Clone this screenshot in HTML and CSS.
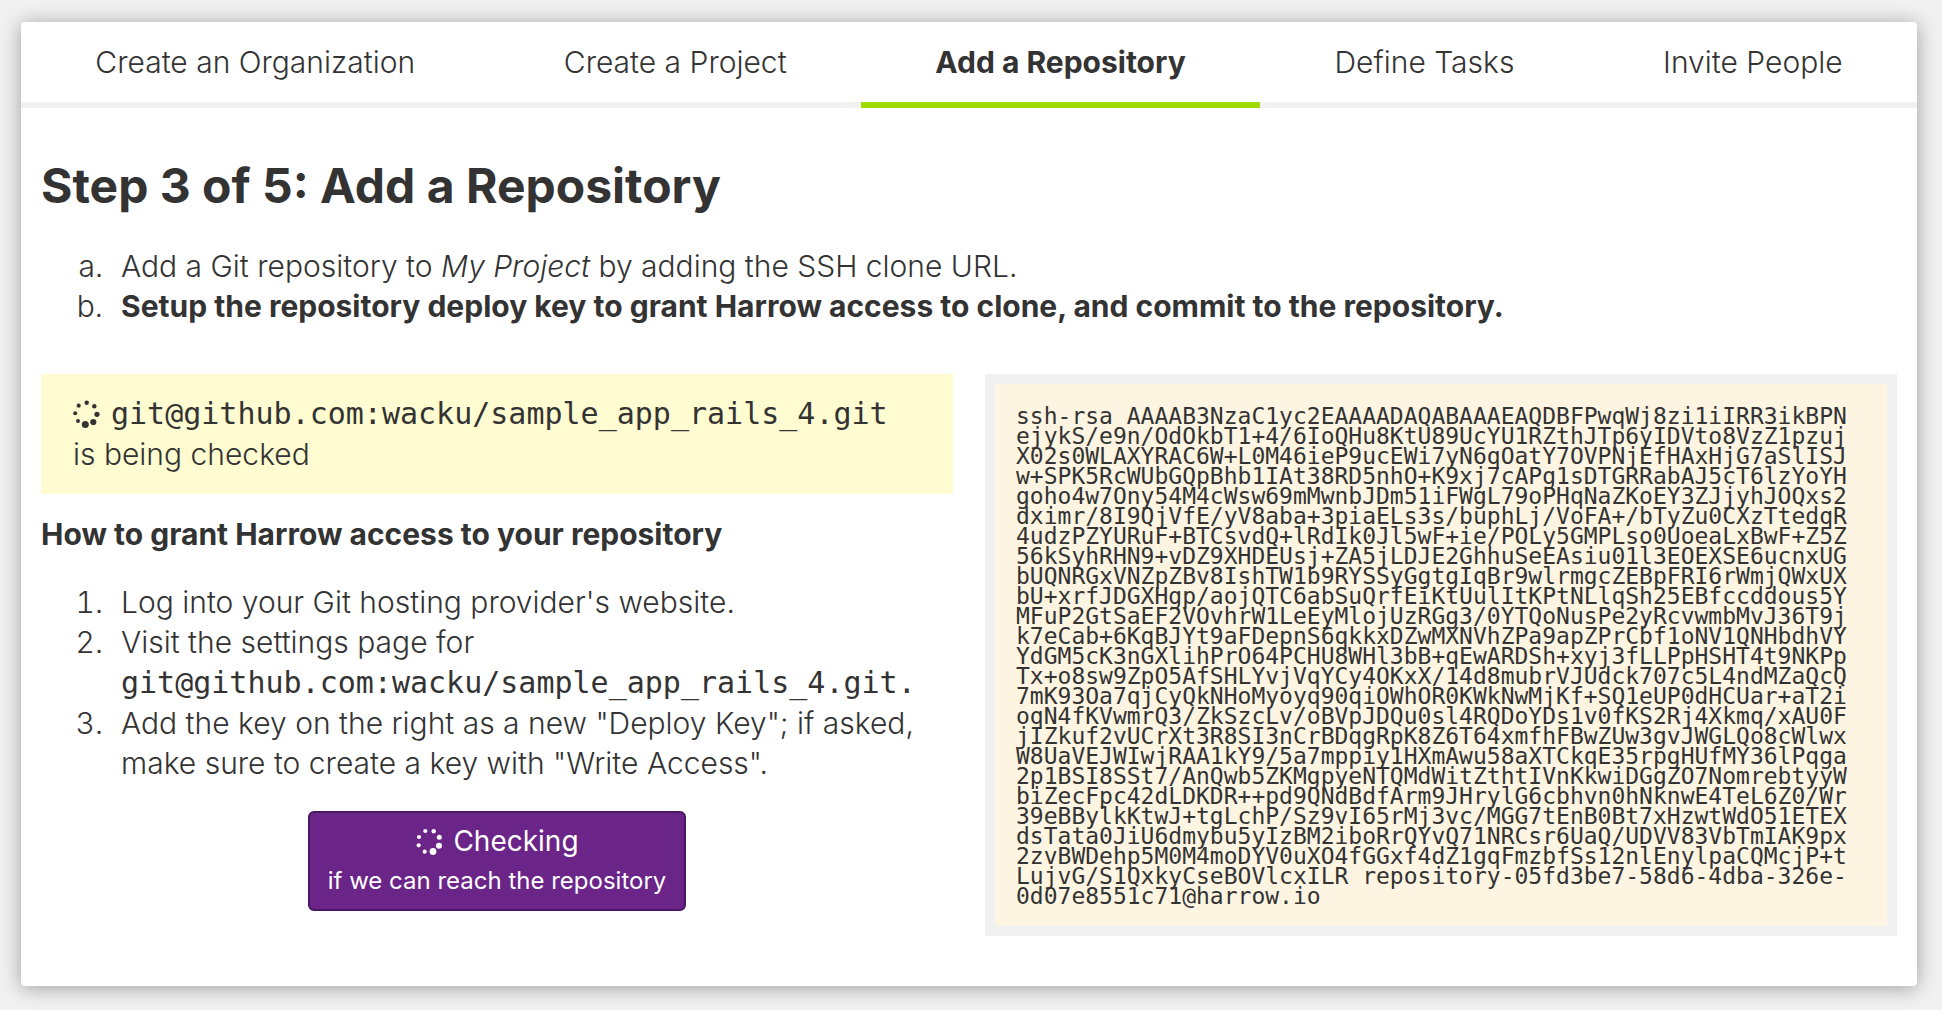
FILE: index.html
```html
<!DOCTYPE html>
<html lang="en">
<head>
<meta charset="utf-8">
<title>Add a Repository</title>
<link rel="stylesheet" href="styles.css">
</head>
<body>
<main class="card">
  <nav class="steps" aria-label="Setup steps">
    <a class="step" href="#organization">Create an Organization</a>
    <a class="step" href="#project">Create a Project</a>
    <a class="step step-active" href="#repository" aria-current="step">Add a Repository</a>
    <a class="step" href="#tasks">Define Tasks</a>
    <a class="step" href="#people">Invite People</a>
  </nav>
  <section class="content">
    <h1 class="title">Step 3 of 5: Add a Repository</h1>
    <ol class="list list-alpha">
      <li>Add a Git repository to <em>My Project</em> by adding the SSH clone URL.</li>
      <li><strong>Setup the repository deploy key to grant Harrow access to clone, and commit to the repository.</strong></li>
    </ol>
    <div class="columns">
      <div class="column">
        <div class="notice" role="status">
          <div class="notice-repo">
            <svg class="spinner" viewBox="0 0 28 28" aria-hidden="true">
              <circle cx="13.7" cy="2.7" r="2.2"/><circle cx="21.3" cy="6.3" r="2.2"/><circle cx="24" cy="14.3" r="2.6"/><circle cx="20.3" cy="22" r="3.1"/><circle cx="12.3" cy="24.5" r="3.5"/><circle cx="5" cy="21" r="2"/><circle cx="2.2" cy="13.3" r="2"/><circle cx="5.7" cy="5.7" r="2.1"/>
            </svg>
            <code class="code">git@github.com:wacku/sample_app_rails_4.git</code>
          </div>
          <div>is being checked</div>
        </div>
        <h2 class="subtitle">How to grant Harrow access to your repository</h2>
        <ol class="list">
          <li>Log into your Git hosting provider's website.</li>
          <li>Visit the settings page for <code class="code">git@github.com:wacku/sample_app_rails_4.git.</code></li>
          <li>Add the key on the right as a new "Deploy Key"; if asked, make sure to create a key with "Write Access".</li>
        </ol>
        <button class="check" type="button">
          <span class="check-main">
            <svg class="spinner" viewBox="0 0 28 28" aria-hidden="true">
              <circle cx="10.3" cy="4" r="2.1"/><circle cx="18.7" cy="4.3" r="2.2"/><circle cx="24.3" cy="10.3" r="2.5"/><circle cx="24" cy="18.7" r="3"/><circle cx="18" cy="24.5" r="3.4"/><circle cx="9.7" cy="24.7" r="2.1"/><circle cx="3.7" cy="18.3" r="2.1"/><circle cx="4" cy="10" r="2.1"/>
            </svg>
            Checking
          </span>
          <span class="check-sub">if we can reach the repository</span>
        </button>
      </div>
      <pre class="key">ssh-rsa AAAAB3NzaC1yc2EAAAADAQABAAAEAQDBFPwqWj8zi1iIRR3ikBPN
ejykS/e9n/OdOkbT1+4/6IoQHu8KtU89UcYU1RZthJTp6yIDVto8VzZ1pzuj
X02s0WLAXYRAC6W+L0M46ieP9ucEWi7yN6qOatY7OVPNjEfHAxHjG7aSlISJ
w+SPK5RcWUbGQpBhb1IAt38RD5nhO+K9xj7cAPg1sDTGRRabAJ5cT6lzYoYH
goho4w7Ony54M4cWsw69mMwnbJDm51iFWgL79oPHqNaZKoEY3ZJjyhJOQxs2
dximr/8I9QjVfE/yV8aba+3piaELs3s/buphLj/VoFA+/bTyZu0CXzTtedqR
4udzPZYURuF+BTCsvdQ+lRdIk0Jl5wF+ie/POLy5GMPLso0UoeaLxBwF+Z5Z
56kSyhRHN9+vDZ9XHDEUsj+ZA5jLDJE2GhhuSeEAsiu01l3EOEXSE6ucnxUG
bUQNRGxVNZpZBv8IshTW1b9RYSSyGgtgIqBr9wlrmgcZEBpFRI6rWmjQWxUX
bU+xrfJDGXHgp/aojQTC6abSuQrfEiKtUulItKPtNLlqSh25EBfccddous5Y
MFuP2GtSaEF2VOvhrW1LeEyMlojUzRGg3/0YTQoNusPe2yRcvwmbMvJ36T9j
k7eCab+6KqBJYt9aFDepnS6qkkxDZwMXNVhZPa9apZPrCbf1oNV1QNHbdhVY
YdGM5cK3nGXlihPrO64PCHU8WHl3bB+qEwARDSh+xyj3fLLPpHSHT4t9NKPp
Tx+o8sw9ZpO5AfSHLYvjVqYCy4OKxX/14d8mubrVJUdck707c5L4ndMZaQcQ
7mK93Oa7qjCyQkNHoMyoyq90qiOWhOR0KWkNwMjKf+SQ1eUP0dHCUar+aT2i
oqN4fKVwmrQ3/ZkSzcLv/oBVpJDQu0sl4RQDoYDs1v0fKS2Rj4Xkmq/xAU0F
jIZkuf2vUCrXt3R8SI3nCrBDqgRpK8Z6T64xmfhFBwZUw3gvJWGLQo8cWlwx
W8UaVEJWIwjRAA1kY9/5a7mppiy1HXmAwu58aXTCkqE35rpgHUfMY36lPqga
2p1BSI8SSt7/AnQwb5ZKMgpyeNTQMdWitZthtIVnKkwiDGgZO7NomrebtyyW
biZecFpc42dLDKDR++pd9QNdBdfArm9JHrylG6cbhvn0hNknwE4TeL6Z0/Wr
39eBBylkKtwJ+tgLchP/Sz9vI65rMj3vc/MGG7tEnB0Bt7xHzwtWdO51ETEX
dsTata0JiU6dmybu5yIzBM2iboRrQYvQ71NRCsr6UaQ/UDVV83VbTmIAK9px
2zvBWDehp5M0M4moDYV0uXO4fGGxf4dZ1gqFmzbfSs12nlEnylpaCQMcjP+t
LujvG/S1QxkyCseBOVlcxILR repository-05fd3be7-58d6-4dba-326e-
0d07e8551c71@harrow.io</pre>
    </div>
  </section>
</main>
</body>
</html>
```

FILE: styles.css
```css
* { box-sizing: border-box; }

body {
  margin: 0;
  padding: 22px 25px 24px 21px;
  background: #f1f1f1;
  color: #333;
  font: 300 30px/40px Inter, "Liberation Sans", sans-serif;
}

.card {
  background: #fff;
  border-radius: 4px;
  box-shadow: 0 2px 20px rgba(0, 0, 0, 0.35);
}

.steps { display: flex; }

.step {
  flex: 1 1 auto;
  padding: 20px 0;
  border-bottom: 6px solid #f1f1f1;
  color: inherit;
  text-align: center;
  text-decoration: none;
}

.step-active {
  border-bottom-color: #9fdb00;
  font-weight: 700;
}

.content { padding: 48px 20px 50px; }

.title {
  margin: 0;
  font-size: 48px;
  font-weight: 700;
  line-height: 60px;
}

.list {
  margin: 28px 0 0;
  padding-left: 70px;
}

.list li { padding-left: 10px; }

.list-alpha {
  margin-top: 30px;
  list-style-type: lower-alpha;
}

strong { font-weight: 700; }

.columns {
  display: grid;
  grid-template-columns: 1fr 1fr;
  align-items: start;
  gap: 32px;
  margin-top: 48px;
}

.column {
  display: flex;
  flex-direction: column;
  min-width: 0;
}

.notice {
  padding: 20px 32px;
  background: #fefcd0;
}

.notice-repo {
  display: flex;
  align-items: center;
  gap: 10px;
}

.code { font: 400 30px/40px "DejaVu Sans Mono", monospace; }

.spinner {
  width: 28px;
  height: 28px;
  fill: currentColor;
}

.subtitle {
  margin: 20px 0 0;
  font-size: 30px;
  font-weight: 700;
  line-height: 40px;
}

.check {
  align-self: center;
  display: flex;
  flex-direction: column;
  align-items: center;
  margin-top: 28px;
  padding: 8px 18px;
  border: 2px solid #4a1763;
  border-radius: 6px;
  background: #6b2487;
  color: #fff;
  font: 400 28px/40px Inter, "Liberation Sans", sans-serif;
}

.check-main {
  display: flex;
  align-items: center;
  gap: 10px;
}

.check-sub { font-size: 24px; }

.key {
  min-width: 0;
  margin: 0;
  padding: 22px 21px 20px;
  border: 10px solid #f1f1f1;
  background: #fdf5e2;
  font: 400 23px/20px "DejaVu Sans Mono", monospace;
  white-space: pre-wrap;
  overflow-wrap: anywhere;
}
```
